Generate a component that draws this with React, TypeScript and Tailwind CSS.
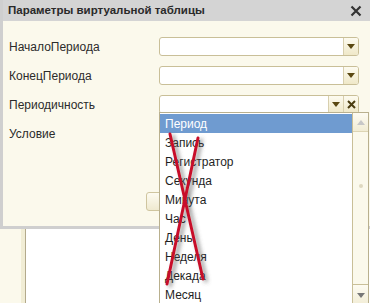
import React from 'react';

const fields = ['НачалоПериода', 'КонецПериода', 'Периодичность'];
const items = ['Период', 'Запись', 'Регистратор', 'Секунда', 'Минута', 'Час', 'День', 'Неделя', 'Декада', 'Месяц'];

const Arrow = ({ color = '#5a4812' }: { color?: string }) => (
  <svg width="8" height="5" viewBox="0 0 8 5">
    <path d="M0 0 H8 L4 5 Z" fill={color} />
  </svg>
);

const DropButton = ({ clear }: { clear?: boolean }) => (
  <div className="flex h-full">
    <div className="flex w-[15px] items-center justify-center border-l border-[#d8cfae] bg-gradient-to-b from-[#fdfbf0] to-[#efe8c8]">
      <Arrow />
    </div>
    {clear && (
      <div className="flex w-[15px] items-center justify-center border-l border-[#d8cfae] bg-gradient-to-b from-[#fdfbf0] to-[#efe8c8]">
        <svg width="9" height="9" viewBox="0 0 9 9">
          <path d="M1 1 L8 8 M8 1 L1 8" stroke="#4a3c10" strokeWidth="2" />
        </svg>
      </div>
    )}
  </div>
);

const App: React.FC = () => {
  return (
    <div className="relative h-[303px] w-[370px] overflow-hidden bg-white font-['Liberation_Sans',Arial,sans-serif] text-[12px] text-[#2b2b2b]">
      {/* Dialog */}
      <div className="flex h-[229px] flex-col border-b-[3px] border-l-[3px] border-[#cfcfcf] shadow-[0_1px_0_#8a8a8a]">
        <div className="flex h-[21px] items-center justify-between bg-[#d4d4d4] pl-[5px] pr-[8px]">
          <span className="text-[11.5px] font-bold text-[#2a2a2a]">Параметры виртуальной таблицы</span>
          <svg width="12" height="12" viewBox="0 0 12 12">
            <path d="M1.5 1.5 L10.5 10.5 M10.5 1.5 L1.5 10.5" stroke="#333" strokeWidth="2.2" />
          </svg>
        </div>
        <div className="flex flex-1 flex-col bg-[#fbf9ec] pl-[6px] pt-[16px]">
          {fields.map((f, i) => (
            <div key={f} className="mb-[10px] flex h-[19px] items-center">
              <span className="w-[150px]">{f}</span>
              <div className="flex h-[19px] w-[200px] items-stretch justify-end overflow-hidden rounded-[3px] border border-[#c9bf98] bg-white">
                <DropButton clear={i === 2} />
              </div>
            </div>
          ))}
          <div className="flex h-[19px] items-center">
            <span>Условие</span>
          </div>
          <div className="mt-[49px] ml-[137px] h-[19px] w-[80px] rounded-[3px] border border-[#cfc59f] bg-gradient-to-b from-[#fdfbf1] to-[#efe9cf]" />
        </div>
      </div>

      {/* Background behind dialog */}
      <div className="flex h-[74px]">
        <div className="w-[21px] bg-[#fbf9ec]" />
        <div className="w-[4px] bg-[#f1edd5]" />
        <div className="w-px bg-[#b3aa8c]" />
        <div className="flex-1 bg-white" />
      </div>

      {/* Popup list */}
      <div className="absolute left-[159px] top-[112px] flex h-[195px] w-[210px] border border-[#b9b08e] bg-white">
        <div className="flex-1 pt-px">
          {items.map((it, i) => (
            <div
              key={it}
              className={
                i === 0
                  ? 'flex h-[19px] items-center bg-[#6f9bd0] pl-[5px] text-white'
                  : 'flex h-[19px] items-center pl-[5px] text-[#1f1f1f]'
              }
            >
              {it}
            </div>
          ))}
        </div>
        <div className="flex w-[16px] flex-col border-l border-[#c9bf98] bg-[#fbf9ec]">
          <div className="flex h-[19px] items-center justify-center border-b border-[#ddd5b4] bg-gradient-to-b from-[#fdfbf2] to-[#f1ecd4]">
            <svg width="8" height="5" viewBox="0 0 8 5">
              <path d="M0 5 H8 L4 0 Z" fill="#c7c7c7" />
            </svg>
          </div>
          <div className="flex flex-1 items-start justify-center pt-[52px]">
            <div className="h-[4px] w-[4px] rounded-full bg-[#ded8c0]" />
          </div>
          <div className="flex h-[22px] items-center justify-center border-t border-[#c9bf98] bg-gradient-to-b from-[#fdfbf2] to-[#f1ecd4]">
            <Arrow color="#777" />
          </div>
        </div>
      </div>

      {/* Red cross overlay */}
      <svg className="absolute left-[160px] top-[128px]" width="52" height="165" viewBox="0 0 52 165">
        <defs>
          <filter id="sh" x="-50%" y="-20%" width="200%" height="140%">
            <feDropShadow dx="3" dy="2" stdDeviation="2" floodColor="#555" floodOpacity="0.7" />
          </filter>
        </defs>
        <g filter="url(#sh)" stroke="#c8102a" strokeWidth="3" strokeLinecap="round">
          <path d="M10 6 L43 151" />
          <path d="M38 10 L7 156" />
        </g>
      </svg>
    </div>
  );
};

export default App;
